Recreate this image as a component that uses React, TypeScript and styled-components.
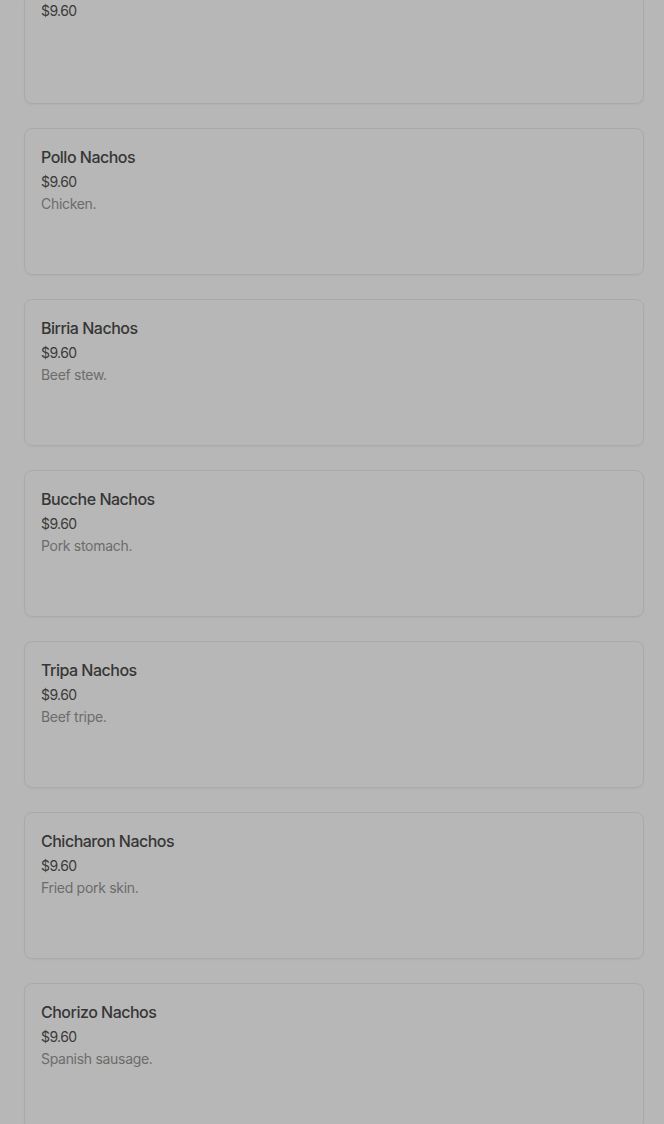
import React from "react";
import styled, { createGlobalStyle } from "styled-components";

const Global = createGlobalStyle`
  html, body { margin: 0; padding: 0; background: #b7b7b7; }
  body { font-family: Inter, "Noto Sans", "Liberation Sans", sans-serif; overflow: hidden; }
`;

const Page = styled.div`
  width: 664px;
  height: 1124px;
  overflow: hidden;
  background: #b7b7b7;
`;

const List = styled.div`
  display: flex;
  flex-direction: column;
  gap: 24px;
  padding: 0 20px 0 24px;
`;

const Card = styled.div<{ $partial?: boolean }>`
  box-sizing: border-box;
  height: ${(p) => (p.$partial ? "104px" : "147px")};
  border: 1px solid #aaaaaa;
  border-top: ${(p) => (p.$partial ? "none" : "1px solid #aaaaaa")};
  border-radius: ${(p) => (p.$partial ? "0 0 8px 8px" : "8px")};
  padding: ${(p) => (p.$partial ? "1px 16px 16px" : "16px 16px 16px")};
  box-shadow: 0 1px 2px rgba(0, 0, 0, 0.04);
  display: flex;
  flex-direction: column;
`;

const Title = styled.div`
  font-size: 16px;
  line-height: 24px;
  font-weight: 500;
  color: #363636;
  letter-spacing: -0.5px;
`;

const Price = styled.div<{ $first?: boolean }>`
  margin-top: ${(p) => (p.$first ? "0" : "3px")};
  font-size: 14px;
  line-height: 20px;
  color: #3a3a3a;
  letter-spacing: -0.6px;
`;

const Desc = styled.div`
  margin-top: 2px;
  font-size: 14px;
  line-height: 20px;
  color: #6c6c6c;
  letter-spacing: -0.3px;
`;

const items = [
  { name: "Pollo Nachos", desc: "Chicken." },
  { name: "Birria Nachos", desc: "Beef stew." },
  { name: "Bucche Nachos", desc: "Pork stomach." },
  { name: "Tripa Nachos", desc: "Beef tripe." },
  { name: "Chicharon Nachos", desc: "Fried pork skin." },
  { name: "Chorizo Nachos", desc: "Spanish sausage." },
];

export default function App() {
  return (
    <Page>
      <Global />
      <List>
        <Card $partial>
          <Price $first>$9.60</Price>
        </Card>
        {items.map((it) => (
          <Card key={it.name}>
            <Title>{it.name}</Title>
            <Price>$9.60</Price>
            <Desc>{it.desc}</Desc>
          </Card>
        ))}
      </List>
    </Page>
  );
}
